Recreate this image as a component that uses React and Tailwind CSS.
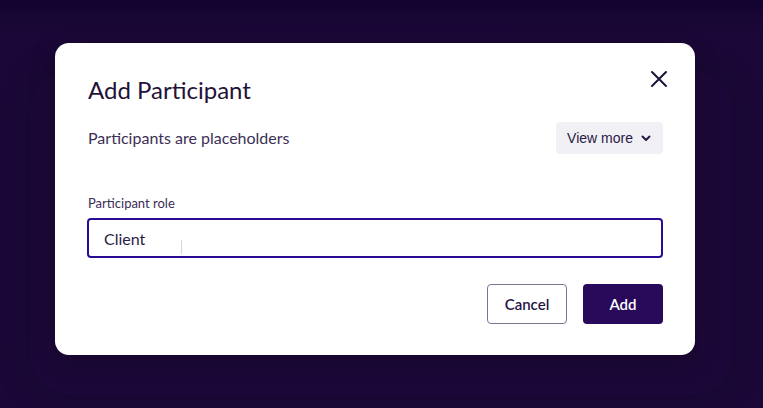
import React, { useState } from "react";

const ChevronDown = () => (
  <svg width="12" height="12" viewBox="0 0 12 12" fill="none">
    <path d="M2.5 4.5 6 8 9.5 4.5" stroke="#2a1a48" strokeWidth="2" strokeLinecap="round" strokeLinejoin="round" />
  </svg>
);

const CloseIcon = () => (
  <svg width="18" height="18" viewBox="0 0 18 18" fill="none">
    <path d="M2 2 16 16M16 2 2 16" stroke="#1f1338" strokeWidth="2" strokeLinecap="round" />
  </svg>
);

const App = () => {
  const [role, setRole] = useState("Client");

  return (
    <div className="relative h-[408px] w-[763px] overflow-hidden bg-[#1c0838] font-['Lato',sans-serif]">
      <div className="h-[34px] bg-gradient-to-b from-[#130330] to-[#1c0838]" />
      {/* card behind the overlay */}
      <div className="pointer-events-none absolute left-[30px] right-[30px] top-[70px] h-[325px] rounded-[40px] shadow-[0_0_30px_rgba(10,0,30,0.35)]" />

      <div className="relative ml-[55px] mt-[9px] h-[312px] w-[640px] rounded-[14px] bg-white pl-[32px] pr-[32px] pt-[33px] shadow-[0_6px_24px_rgba(0,0,0,0.25)]">
        <button className="absolute right-[24px] top-[24px] flex h-[24px] w-[24px] items-center justify-center">
          <CloseIcon />
        </button>

        <h2 className="pl-[1px] text-[24px] leading-[28px] text-[#1f1338]">Add Participant</h2>

        <div className="mt-[18px] flex items-center justify-between pl-[1px]">
          <p className="text-[16px] text-[#3b3054]">Participants are placeholders</p>
          <button className="flex h-[32px] w-[107px] items-center justify-center gap-[7px] rounded-[4px] bg-[#f1f0f4] font-['Liberation_Sans',sans-serif] text-[14px] text-[#2a1a48]">
            View more
            <ChevronDown />
          </button>
        </div>

        <div className="mt-[40px]">
          <label htmlFor="role" className="block pl-[1px] text-[13px] leading-[18px] text-[#3a2d55]">
            Participant role
          </label>
          <div className="relative mt-[6px]">
            <input
              id="role"
              value={role}
              onChange={(e) => setRole(e.target.value)}
              className="h-[40px] w-full rounded-[4px] border-2 border-[#2c0b94] px-[15px] text-[16px] text-[#2a1e45] outline-none"
            />
            <span className="pointer-events-none absolute left-[94px] top-[22px] h-[14px] w-[1px] bg-[#d6d6d6]" />
          </div>
        </div>

        <div className="mt-[26px] flex justify-end gap-[16px]">
          <button className="h-[40px] w-[80px] rounded-[4px] border border-[#7d7292] text-[15px] font-semibold text-[#261447]">
            Cancel
          </button>
          <button className="h-[40px] w-[80px] rounded-[4px] bg-[#29095a] text-[15px] font-semibold text-white">
            Add
          </button>
        </div>
      </div>
    </div>
  );
};

export default App;
